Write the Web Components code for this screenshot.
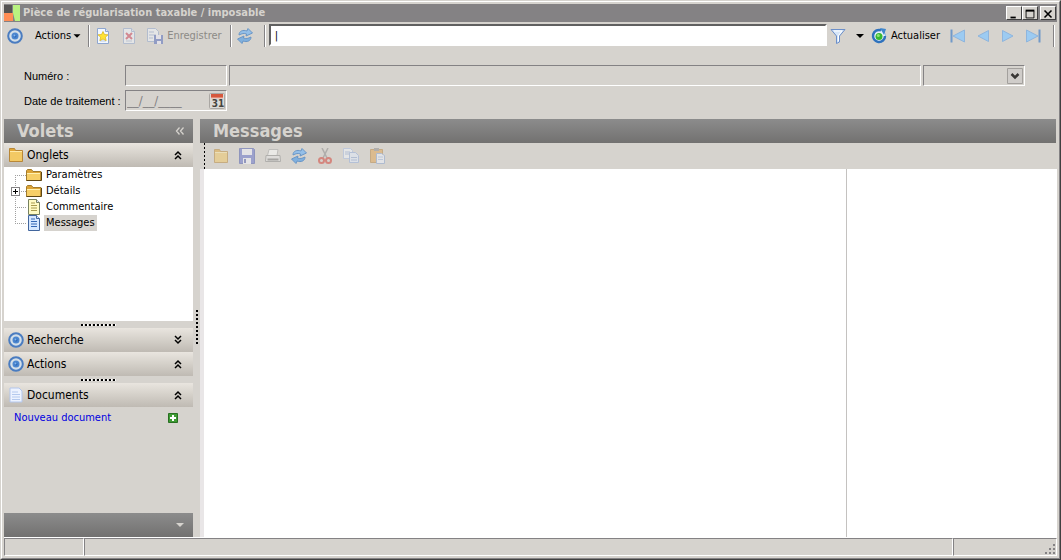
<!DOCTYPE html>
<html lang="fr">
<head>
<meta charset="utf-8">
<title>Pièce de régularisation taxable / imposable</title>
<style>
html, body { height: 100%; margin: 0; }
body { background: #d6d3ce; color: #000; font: 11px/16px "DejaVu Sans Condensed", "DejaVu Sans", sans-serif; overflow: hidden; }
</style>
</head>
<body>
<app-window></app-window>
<script>
const BASE = '<style>:host,*{box-sizing:border-box}button,input,select{font:inherit;color:inherit;margin:0;border-radius:0}button{background:none;border:0;padding:0}button:disabled{color:#8c8a86}</style>';
const define = (name, html, setup) => {
  const template = document.createElement('template');
  template.innerHTML = BASE + html;
  customElements.define(name, class extends HTMLElement {
    constructor() {
      super();
      this.attachShadow({ mode: 'open' }).append(template.content.cloneNode(true));
    }
    connectedCallback() { if (setup) setup(this, this.shadowRoot); }
  });
};

const page = (lines, edge = '#8fa6cf', fill = '#f3f8ff') => `<path d="M2.500 .5h8l3 3v12h-11z" fill="${fill}" stroke="${edge}"/><path d="M10.500 .5v3h3" fill="#dfe8f8" stroke="${edge}"/>${lines}`;
const sync = '<path d="M2 7C2 3 6 1.500 10 3l1-2.500L15.500 5 9 8l.6-2C7 5 5 5.500 2 7z" fill="#94bfe8" stroke="#6a96c6"/><path d="M14 9c0 4-4 5.500-8 4l-1 2.500L.5 11 7 8l-.6 2c2.600 1 4.600.5 7.600-1z" fill="#80b0de" stroke="#6a96c6"/>';
const ICONS = {
  target: '<circle cx="8" cy="8" r="6.800" fill="#d3dfe9" stroke="#4a7cc0" stroke-width="2"/><circle cx="8" cy="8" r="3.500" fill="#4b86cf"/><circle cx="8" cy="8" r="1.500" fill="#2b66b6"/><circle cx="7.500" cy="7.500" r="1" fill="#84b7ee"/>',
  logo: '<path d="M0 0h8v8H0z" fill="#555352"/><path d="M0 8h9v8H0z" fill="#ff8d55"/><path d="M9 0h7v16h-5L9 8z" fill="#b9f280"/>',
  newPage: page('<path d="M5 13h6" stroke="#b7c8e6"/><path d="M8 3.500l1.500 3 3.500.3-2.600 2.400.8 3.500L8 11l-3.200 1.700.8-3.500L3 6.800l3.500-.3z" fill="#ffe334" stroke="#d9b21b" stroke-width=".7"/>'),
  deletePage: page('<path d="M5 5l6 6M11 5l-6 6" stroke="#cf3f55" stroke-width="2"/><path d="M5 13h6" stroke="#a9b8d4"/>'),
  savePage: '<path d="M.5.5h8l3 3v10H.5z" fill="#f3f8ff" stroke="#8fa6cf"/><path d="M2 4h5M2 7h7M2 10h4" stroke="#90a7d2"/><path d="M7 7h9v9H7z" fill="#4f66bb"/><path d="M9 7h5v4H9zM10 13h4v3h-4z" fill="#eef"/>',
  sync,
  filter: '<path d="M1 1.500h14L9.500 8v6l-3 1.500V8z" fill="#d5e5f8" stroke="#6c8fc9"/><path d="M4 3h8L8.500 7.500V13" fill="none" stroke="#fff"/>',
  refresh: '<circle cx="8" cy="8" r="6.500" fill="#e7f1fa" stroke="#8ab6e3"/><path d="M10 2.300A6 6 0 1 0 14 8" fill="none" stroke="#2f72bd" stroke-width="2.500"/><path d="M9 0l6 1-2 6z" fill="#3f86cc"/><circle cx="8" cy="8.500" r="3.500" fill="#37b832"/><circle cx="7.300" cy="7.500" r="1.500" fill="#8ee474"/>',
  first: '<path d="M1.500 1.500v13" stroke="#7199c9" stroke-width="2"/><path d="M14.500 2v12L3 8z" fill="#9ccbf2" stroke="#8fb5dd"/>',
  prev: '<path d="M13.500 2.500v11L3 8z" fill="#9ccbf2" stroke="#8fb5dd"/>',
  next: '<path d="M2.500 2.500v11L13 8z" fill="#9ccbf2" stroke="#8fb5dd"/>',
  last: '<path d="M14.500 1.500v13" stroke="#7199c9" stroke-width="2"/><path d="M1.500 2v12L13 8z" fill="#9ccbf2" stroke="#8fb5dd"/>',
  calendar: '<rect x=".5" y=".5" width="15" height="15" rx="1" fill="#dcdad7" stroke="#aaa7a3"/><path d="M2 1h12v4H2z" fill="#d6573c"/><path d="M2 5h12" stroke="#f0b8a8"/><text x="9" y="14" text-anchor="middle" font-family="DejaVu Sans Condensed, DejaVu Sans, sans-serif" font-size="10" font-weight="bold" fill="#46443f">31</text>',
  folder: '<path d="M1.500 14.500v-13h5l1 2h7v11z" fill="#e0a637" stroke="#b88737"/><path d="M2 5h12v9H2z" fill="#f3c964"/><path d="M2 4.500h12" stroke="#ffe9a8"/>',
  folderTree: '<path d="M.5 13.500v-10l1-1h4l1.500 2h8v9z" fill="#dca336" stroke="#a37c2c"/><path d="M1 6h13v7H1z" fill="#f7cf68"/><path d="M.5 13.500h15V5" stroke="#5e4614" fill="none"/><path d="M1 6.500h13" stroke="#fff1b0"/>',
  note: page('<path d="M5 4h4M5 6.500h6M5 9h6M5 11.500h6" stroke="#a89a4c"/>', '#77815f', '#fffbc4'),
  message: page('<path d="M5 4h4M5 6.500h6M5 9h6M5 11.500h6" stroke="#3468b5"/>', '#41659d', '#d6e8ff'),
  doc: '<path d="M2 1h9l3 3v11H2z" fill="#edf3ff" stroke="#b3c6ec"/><path d="M4 5h6M4 7.500h8M4 10h8M4 12.500h8" stroke="#b4c9ee"/>',
  disk: '<path d="M.5.5h14l1 1v14H.5z" fill="#6371cb" stroke="#4a58ae"/><path d="M3 1h10v6H3zM4 10h8v6H4z" fill="#f2f3fc"/><path d="M5 11h2v4H5z" fill="#515dae"/>',
  print: '<path d="M4 1.500h9l-1 6H2.500z" fill="#fff" stroke="#aaa"/><path d="M1 7.500h14l.5 6H.5z" fill="#e6e6e6" stroke="#8c8c8c"/><path d="M2.500 11.500h11" stroke="#777" stroke-width="2"/>',
  cut: '<path d="M5 0l5 10M11 0L6 10" stroke="#8a8a8a" stroke-width="1.500"/><circle cx="4.500" cy="12.500" r="2.500" fill="none" stroke="#d33b30" stroke-width="2"/><circle cx="11.500" cy="12.500" r="2.500" fill="none" stroke="#d33b30" stroke-width="2"/>',
  copy: '<path d="M.5.5h7l2 2v8h-9z" fill="#f2f7ff" stroke="#a9bfe6"/><path d="M2 4h5M2 6h5" stroke="#91aad5"/><path d="M6.500 4.500h6l3 3v7h-9z" fill="#e2edff" stroke="#93afdf"/><path d="M8 9.500h6M8 12h6" stroke="#91aad5"/>',
  paste: '<path d="M1.500 1.500h12v13h-12z" fill="#e0a552" stroke="#b5823f"/><path d="M5 0h5v3H5z" fill="#8b8b8b"/><path d="M7.500 5.500h5l3 2v8h-8z" fill="#eef4ff" stroke="#8aa5d1"/><path d="M9 9h5M9 11.500h5" stroke="#a4bce3"/>',
  down: '<path d="M4 6h8l-4 4z" fill="currentColor"/>',
  add: '<path d="M3.500 3.500h9v9h-9z" fill="#3d9a32" stroke="#286f22"/><path d="M8 5v6M5 8h6" stroke="#fff" stroke-width="2"/>',
  up2: '<path d="M5 8l3-3 3 3M5 12l3-3 3 3" fill="none" stroke="currentColor" stroke-width="1.500"/>',
  down2: '<path d="M5 4l3 3 3-3M5 8l3 3 3-3" fill="none" stroke="currentColor" stroke-width="1.500"/>',
  left2: '<path d="M7.500 4.500l-3 3.500 3 3.500M11.500 4.500L8.500 8l3 3.500" fill="none" stroke="currentColor" stroke-width="1.300"/>',
  minimise: '<path d="M4 12h6" stroke="currentColor" stroke-width="2"/>',
  maximise: '<path d="M3.500 4.500h9v8h-9z" fill="none" stroke="currentColor"/><path d="M3 4h10" stroke="currentColor" stroke-width="2"/>',
  close: '<path d="M4 4l8 8M12 4l-8 8" stroke="currentColor" stroke-width="1.800"/>',
  chevron: '<path d="M.5.5h15v15H.5z" fill="#d0cdca" stroke="#a3a09d"/><path d="M4.500 6L8 9.500 11.500 6" fill="none" stroke="#393735" stroke-width="2.500"/>'
};

define('ui-icon', '<style>:host{display:block;flex:none;width:16px;height:16px}:host([faded]){opacity:.5}svg{display:block;width:100%;height:100%}</style><svg viewBox="0 0 16 16" aria-hidden="true"></svg>',
  (el, root) => { root.querySelector('svg').innerHTML = ICONS[el.getAttribute('name')]; });

define('title-bar', `<style>
:host{display:flex;align-items:center;height:18px;background:#848284;color:#d6d3ce;flex:none;padding-right:1px}
h1{font:inherit;font-weight:bold;margin:0 auto 0 3px}
button{width:16px;height:14px;background:#d6d3ce;color:#000;border:1px solid;border-color:#fff #404040 #404040 #fff;display:grid;place-items:center;overflow:hidden}
button ui-icon{width:14px;height:14px}.x{margin-left:2px}
</style><ui-icon name="logo"></ui-icon><h1>Pièce de régularisation taxable / imposable</h1>
<button aria-label="Réduire"><ui-icon name="minimise"></ui-icon></button><button aria-label="Agrandir"><ui-icon name="maximise"></ui-icon></button><button class="x" aria-label="Fermer"><ui-icon name="close"></ui-icon></button>`);

define('tool-separator', '<style>:host{display:block;flex:none;width:2px;height:22px;border-left:1px solid #848284;border-right:1px solid #fff}</style>');

define('main-toolbar', `<style>
:host{display:flex;align-items:center;height:28px;flex:none;padding:0 2px 0 3px}
button{display:flex;align-items:center;flex:none}
.menu{margin:0 4px 0 12px}.menu ui-icon{margin-left:-1px;width:14px}
.a{margin-left:5px}.b{margin:0 10px}.save{gap:4px;margin-right:8px}.s{margin:0 11px 0 5px}
input{flex:1;min-width:40px;height:22px;margin:-2px 3px 0 3px;border:2px solid;border-color:#606060 #fff #fff #606060;background:#fff;padding:0 4px}
.f{margin-right:6px}.r{gap:4px;margin:0 10px 0 3px}.nav{display:flex;gap:9px;margin-right:12px}
</style>
<button aria-label="Menu"><ui-icon name="target"></ui-icon></button>
<button class="menu">Actions<ui-icon name="down"></ui-icon></button>
<tool-separator></tool-separator>
<button class="a" aria-label="Nouveau"><ui-icon name="newPage"></ui-icon></button>
<button class="b" aria-label="Supprimer" disabled><ui-icon name="deletePage" faded></ui-icon></button>
<button class="save" disabled><ui-icon name="savePage" faded></ui-icon>Enregistrer</button>
<tool-separator></tool-separator>
<button class="s" aria-label="Synchroniser"><ui-icon name="sync"></ui-icon></button>
<tool-separator></tool-separator>
<input aria-label="Rechercher" value="|">
<button class="f" aria-label="Filtrer"><ui-icon name="filter"></ui-icon></button>
<button aria-label="Filtres"><ui-icon name="down"></ui-icon></button>
<button class="r"><ui-icon name="refresh"></ui-icon>Actualiser</button>
<div class="nav"><button aria-label="Premier"><ui-icon name="first"></ui-icon></button><button aria-label="Précédent"><ui-icon name="prev"></ui-icon></button><button aria-label="Suivant"><ui-icon name="next"></ui-icon></button><button aria-label="Dernier"><ui-icon name="last"></ui-icon></button></div>
<tool-separator></tool-separator>`);

define('record-form', `<style>
:host{display:grid;grid-template-columns:99px 102px minmax(40px,1fr) 102px;gap:4px 2px;padding:15px 32px 8px 20px;flex:none;align-items:center}
label{white-space:nowrap;font-family:"Liberation Sans",Arial,sans-serif}
input,select,.date{width:100%;height:21px;background:transparent;border:1px solid;border-color:#848284 #fff #fff #848284;padding:0 1px}
.date{display:flex;align-items:center}.date input{border:0;height:18px;flex:1;min-width:0;color:#848284;padding:0;font-size:13px}
select{appearance:none}.pick{display:grid;align-items:center}.pick>*{grid-area:1/1}.pick ui-icon{justify-self:end;margin-right:2px;pointer-events:none}
</style>
<label for="n">Numéro :</label><input id="n"><input aria-label="Libellé"><div class="pick"><select aria-label="Type"><option></option></select><ui-icon name="chevron"></ui-icon></div>
<label for="d">Date de traitement :</label><div class="date"><input id="d" value="__/__/____"><button aria-label="Calendrier"><ui-icon name="calendar"></ui-icon></button></div>`);

define('pane-header', `<style>
:host{display:flex;align-items:center;justify-content:space-between;height:24px;flex:none;padding:0 5px 0 13px;background:linear-gradient(#8c8c8c,#727170);color:#d6d3ce}
h2{font-size:18px;line-height:24px;font-weight:bold;margin:0}
</style><h2><slot></slot></h2><slot name="tool"></slot>`);

define('side-section', `<style>
:host{display:flex;align-items:center;height:24px;flex:none;padding:0 7px 0 4px;background:linear-gradient(#e9e5df,#d6d2cb 45%,#bfbab3)}
h3{font-size:12px;font-weight:normal;margin:0 auto 0 3px}
</style><span></span><h3><slot></slot></h3><button aria-label="Plier ou déplier"></button>`,
  (el, root) => {
    root.querySelector('span').innerHTML = `<ui-icon name="${el.getAttribute('icon')}"></ui-icon>`;
    root.querySelector('button').innerHTML = `<ui-icon name="${el.getAttribute('fold')}"></ui-icon>`;
  });

define('grip-bar', `<style>
:host{display:grid;place-items:center;height:7px;flex:none;background:#d6d3ce}
i{display:block;width:36px;height:2px;background:repeating-linear-gradient(90deg,#000 0 2px,#fff 2px 3px,#d6d3ce 3px 4px)}
:host([vertical]){height:auto;width:7px}
:host([vertical]) i{width:2px;height:36px;background:repeating-linear-gradient(#000 0 2px,#d6d3ce 2px 4px)}
</style><i></i>`);

define('tab-tree', `<style>
:host{display:block;background:#fff;height:154px;flex:none;overflow:hidden}
ul{list-style:none;margin:0;padding:0 0 0 7px}
li{display:grid;grid-template-columns:15px 17px auto;align-items:center;justify-content:start;height:16px;
 background:repeating-linear-gradient(#a0a0a0 0 1px,#fff 1px 2px) 4px 0/1px 16px no-repeat,repeating-linear-gradient(90deg,#a0a0a0 0 1px,#fff 1px 2px) 4px 8px/12px 1px no-repeat}
li::before{content:"";width:1px}
li:first-child{background-position:4px 8px,4px 8px}
li:last-child{background-position:4px -8px,4px 8px}
li.plus::before{width:9px;height:9px;box-sizing:border-box;border:1px solid #848284;background:linear-gradient(#000,#000) center/5px 1px no-repeat,linear-gradient(#000,#000) center/1px 5px no-repeat,#fff}
span{padding:0 2px;margin-left:1px;line-height:16px}.sel{background:#d6d3ce}
</style><ul>
<li><ui-icon name="folderTree"></ui-icon><span>Paramètres</span></li>
<li class="plus"><ui-icon name="folderTree"></ui-icon><span>Détails</span></li>
<li><ui-icon name="note"></ui-icon><span>Commentaire</span></li>
<li><ui-icon name="message"></ui-icon><span class="sel">Messages</span></li></ul>`);

define('side-pane', `<style>
:host{display:flex;flex-direction:column;width:189px;flex:none}
.link{display:flex;align-items:center;justify-content:space-between;height:22px;padding:0 12px 0 10px;flex:none}
a{color:#0000e0;text-decoration:none}
footer{margin-top:auto;height:24px;background:linear-gradient(#8c8c8c,#727170);color:#d6d3ce;display:flex;align-items:center;justify-content:flex-end;padding-right:5px}
</style>
<pane-header>Volets<button slot="tool" aria-label="Réduire les volets"><ui-icon name="left2"></ui-icon></button></pane-header>
<side-section icon="folder" fold="up2">Onglets</side-section>
<tab-tree></tab-tree><grip-bar></grip-bar>
<side-section icon="target" fold="down2">Recherche</side-section>
<side-section icon="target" fold="up2">Actions</side-section>
<grip-bar></grip-bar>
<side-section icon="doc" fold="up2">Documents</side-section>
<div class="link"><a href="#nouveau">Nouveau document</a><button aria-label="Ajouter"><ui-icon name="add"></ui-icon></button></div>
<footer><button aria-label="Options"><ui-icon name="down"></ui-icon></button></footer>`);

define('message-pane', `<style>
:host{display:flex;flex-direction:column;flex:1;min-width:0}
pane-header{margin-right:1px}
.tools{display:flex;align-items:center;gap:10px;height:26px;flex:none;padding-left:9px;margin-left:4px;
 background:repeating-linear-gradient(#000 0 2px,#d6d3ce 2px 4px) 0 0/1px 100% no-repeat}
.body{display:grid;grid-template-columns:minmax(0,643fr) minmax(0,210fr);flex:1;border-left:4px solid #e9e6e7;background:#fff}
.body div:first-child{border-right:1px solid #c4c2c0}
</style><pane-header>Messages</pane-header>
<div class="tools">
<button aria-label="Ouvrir" disabled><ui-icon name="folder" faded></ui-icon></button>
<button aria-label="Enregistrer" disabled><ui-icon name="disk" faded></ui-icon></button>
<button aria-label="Imprimer" disabled><ui-icon name="print" faded></ui-icon></button>
<button aria-label="Actualiser"><ui-icon name="sync"></ui-icon></button>
<button aria-label="Couper" disabled><ui-icon name="cut" faded></ui-icon></button>
<button aria-label="Copier" disabled><ui-icon name="copy" faded></ui-icon></button>
<button aria-label="Coller" disabled><ui-icon name="paste" faded></ui-icon></button>
</div><div class="body"><div></div><div></div></div>`);

define('status-bar', `<style>
:host{display:grid;grid-template-columns:80px 1fr 104px;height:19px;flex:none;border-top:1px solid #fff}
div{border:1px solid;border-color:#848284 #fff #fff #848284;display:flex;justify-content:flex-end;align-items:flex-end}
svg{display:block}
</style><div></div><div></div><div><svg width="12" height="12" fill="#848284" aria-hidden="true"><path d="M9 1h2v2H9zM9 5h2v2H9zM5 5h2v2H5zM9 9h2v2H9zM5 9h2v2H5zM1 9h2v2H1z"/></svg></div>`);

define('app-window', `<style>
:host{display:flex;flex-direction:column;height:100vh;border:1px solid;border-color:#d6d3ce #404040 #404040 #d6d3ce}
.frame{display:flex;flex-direction:column;flex:1;min-height:0;border:1px solid;border-color:#fff #848284 #848284 #fff;padding:2px}
main{display:flex;flex:1;min-height:0}
</style><div class="frame"><title-bar></title-bar><main-toolbar></main-toolbar><record-form></record-form>
<main><side-pane></side-pane><grip-bar vertical></grip-bar><message-pane></message-pane></main><status-bar></status-bar></div>`);
</script>
</body>
</html>
